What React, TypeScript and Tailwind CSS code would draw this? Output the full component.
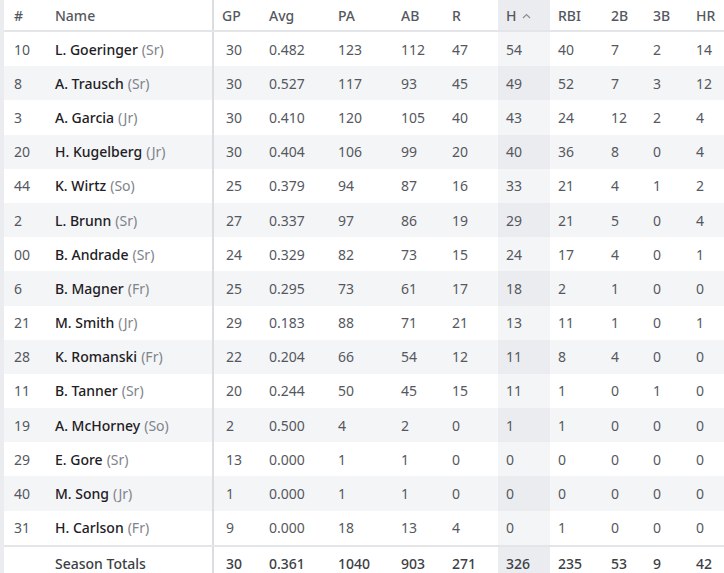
import React from "react";

type Player = {
    num: string;
    name: string;
    cls: string;
    stats: (string | number)[];
};

const players: Player[] = [
    { num: "10", name: "L. Goeringer", cls: "Sr", stats: [30, "0.482", 123, 112, 47, 54, 40, 7, 2, 14] },
    { num: "8", name: "A. Trausch", cls: "Sr", stats: [30, "0.527", 117, 93, 45, 49, 52, 7, 3, 12] },
    { num: "3", name: "A. Garcia", cls: "Jr", stats: [30, "0.410", 120, 105, 40, 43, 24, 12, 2, 4] },
    { num: "20", name: "H. Kugelberg", cls: "Jr", stats: [30, "0.404", 106, 99, 20, 40, 36, 8, 0, 4] },
    { num: "44", name: "K. Wirtz", cls: "So", stats: [25, "0.379", 94, 87, 16, 33, 21, 4, 1, 2] },
    { num: "2", name: "L. Brunn", cls: "Sr", stats: [27, "0.337", 97, 86, 19, 29, 21, 5, 0, 4] },
    { num: "00", name: "B. Andrade", cls: "Sr", stats: [24, "0.329", 82, 73, 15, 24, 17, 4, 0, 1] },
    { num: "6", name: "B. Magner", cls: "Fr", stats: [25, "0.295", 73, 61, 17, 18, 2, 1, 0, 0] },
    { num: "21", name: "M. Smith", cls: "Jr", stats: [29, "0.183", 88, 71, 21, 13, 11, 1, 0, 1] },
    { num: "28", name: "K. Romanski", cls: "Fr", stats: [22, "0.204", 66, 54, 12, 11, 8, 4, 0, 0] },
    { num: "11", name: "B. Tanner", cls: "Sr", stats: [20, "0.244", 50, 45, 15, 11, 1, 0, 1, 0] },
    { num: "19", name: "A. McHorney", cls: "So", stats: [2, "0.500", 4, 2, 0, 1, 1, 0, 0, 0] },
    { num: "29", name: "E. Gore", cls: "Sr", stats: [13, "0.000", 1, 1, 0, 0, 0, 0, 0, 0] },
    { num: "40", name: "M. Song", cls: "Jr", stats: [1, "0.000", 1, 1, 0, 0, 0, 0, 0, 0] },
    { num: "31", name: "H. Carlson", cls: "Fr", stats: [9, "0.000", 18, 13, 4, 0, 1, 0, 0, 0] },
];

const totals = [30, "0.361", 1040, 903, 271, 326, 235, 53, 9, 42];
const statCols = ["GP", "Avg", "PA", "AB", "R", "H", "RBI", "2B", "3B", "HR"];
const SORT_COL = 5;

const grid = "grid grid-cols-[43px_167px_47px_69px_63px_51px_54px_52px_53px_42px_43px_1fr]";

function ChevronUp() {
    return (
        <svg width="9" height="6" viewBox="0 0 9 6" className="ml-[6px] mt-[1px]">
            <path d="M1 5 L4.5 1.5 L8 5" fill="none" stroke="#8a8d93" strokeWidth="1.2" />
        </svg>
    );
}

export default function App() {
    return (
        <div className="w-[724px] h-[573px] overflow-hidden bg-white border-l-4 border-[#ebecef] font-['Noto_Sans',sans-serif] text-[14px]">
            <div className={`${grid} h-[32px] border-b-2 border-[#e4e5e8] text-[#55585e] font-medium`}>
                <div className="pl-[10px] flex items-center">#</div>
                <div className="pl-2 flex items-center border-r-2 border-[#dcdde1]">Name</div>
                {statCols.map((c, i) => (
                    <div
                        key={c}
                        className={`pl-2 flex items-center ${i === SORT_COL ? "bg-[#ebecef]" : ""}`}
                    >
                        {c}
                        {i === SORT_COL && <ChevronUp />}
                    </div>
                ))}
            </div>

            {players.map((p, r) => (
                <div key={p.num + p.name} className={`${grid} h-[34.2px] ${r % 2 === 1 ? "bg-[#f4f5f7]" : "bg-white"}`}>
                    <div className="pl-[10px] flex items-center text-[#55585e]">{p.num}</div>
                    <div className="pl-2 flex items-center border-r-2 border-[#dcdde1] whitespace-nowrap">
                        <span className="text-[#1e2024] font-medium">{p.name}</span>
                        <span className="ml-1 text-[#80838a]">({p.cls})</span>
                    </div>
                    {p.stats.map((s, i) => (
                        <div
                            key={i}
                            className={`flex items-center text-[#55585e] ${i === 0 ? "pl-3" : "pl-2"} ${
                                i === SORT_COL ? (r % 2 === 1 ? "bg-[#ebecef]" : "bg-[#f4f5f7]") : ""
                            }`}
                        >
                            {s}
                        </div>
                    ))}
                </div>
            ))}

            <div className={`${grid} h-[36px] border-t-2 border-[#e4e5e8] text-[#3c3f44] font-medium`}>
                <div />
                <div className="pl-2 flex items-center border-r-2 border-[#dcdde1]">Season Totals</div>
                {totals.map((s, i) => (
                    <div
                        key={i}
                        className={`flex items-center ${i === 0 ? "pl-3" : "pl-2"} ${i === SORT_COL ? "bg-[#ebecef]" : ""}`}
                    >
                        {s}
                    </div>
                ))}
            </div>
        </div>
    );
}
